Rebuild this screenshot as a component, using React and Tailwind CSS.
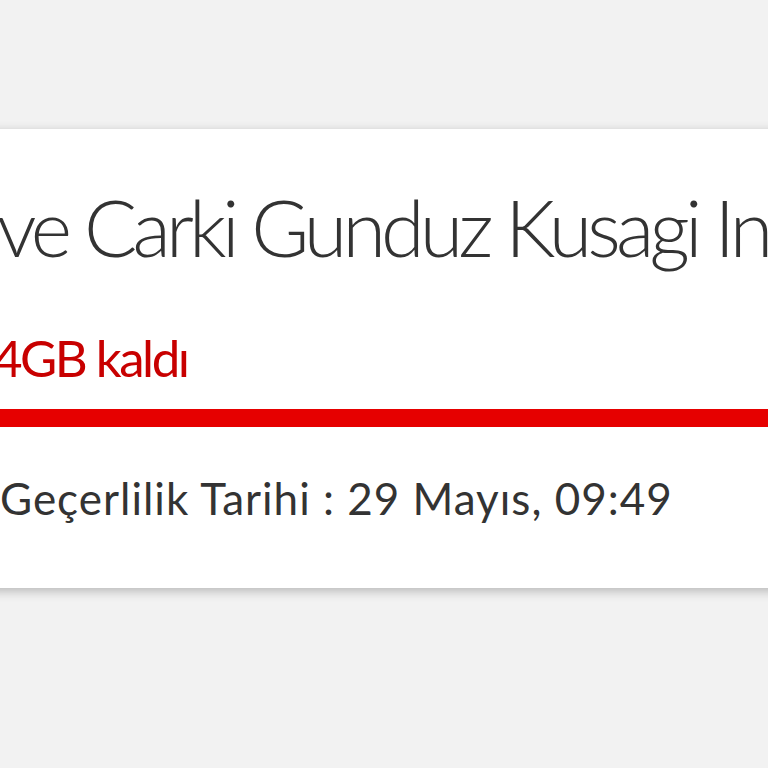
import React from "react";

function Clipped({ hidden, children }) {
  // prefix that runs off the left edge of the card
  return (
    <div className="flex whitespace-nowrap">
      <div className="flex w-0 justify-end">
        <span>{hidden}</span>
      </div>
      <span>{children}</span>
    </div>
  );
}

export default function App() {
  return (
    <div
      className="min-h-screen overflow-hidden bg-[#f2f2f2] pt-[129px]"
      style={{ fontFamily: "Lato, 'Open Sans', sans-serif" }}
    >
      <div className="-ml-[40px] flex h-[459px] w-[calc(100%+80px)] flex-col bg-white pl-[40px] pt-[58px] shadow-[0_3px_10px_rgba(0,0,0,0.25)]">
        <div className="-ml-[3px] text-[79px] font-light leading-none tracking-[-4.8px] text-[#333333]">
          <Clipped hidden={"Hediye\u00a0"}>ve Carki Gunduz Kusagi Internet</Clipped>
        </div>

        <div className="-ml-[7px] mt-[66px] text-[51px] leading-none tracking-[-2.5px] text-[#c80000]">
          <Clipped hidden="1,">4GB kaldı</Clipped>
        </div>

        <div className="-ml-[40px] mt-[26px] h-[18px] w-full bg-[#e60000]" />

        <div className="mt-[49px] text-[44px] leading-none tracking-[1px] text-[#333333]">
          Geçerlilik Tarihi : 29 Mayıs, 09:49
        </div>
      </div>
    </div>
  );
}
